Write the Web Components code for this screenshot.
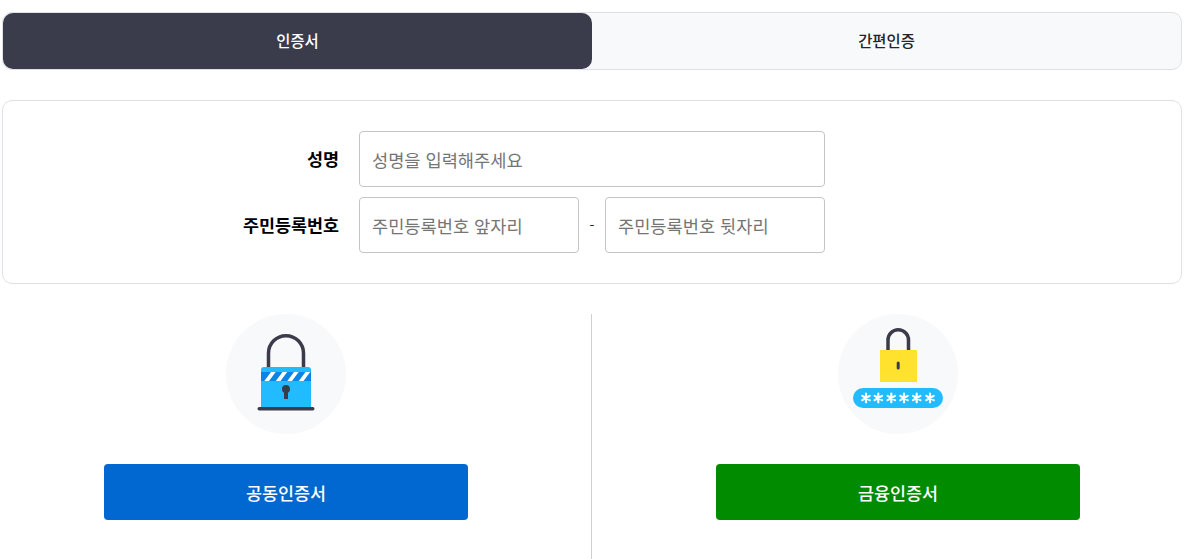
<!DOCTYPE html>
<html lang="ko">
<head>
<meta charset="utf-8">
<title>인증</title>
<style>
html, body { margin: 0; background: #fff; }
body {
    padding: 12px 22px 0 2px;
    height: 559px;
    box-sizing: border-box;
    overflow: hidden;
    font-family: "Noto Sans CJK KR", "Noto Sans", sans-serif;
    color: #000;
}
</style>
</head>
<body>
<auth-tabs>
    <tab-item active>인증서</tab-item>
    <tab-item>간편인증</tab-item>
</auth-tabs>
<id-form></id-form>
<cert-choices></cert-choices>

<script>
class AuthTabs extends HTMLElement {
    constructor() {
        super();
        this.attachShadow({mode: "open"}).innerHTML = `
        <style>
        :host {
            display: flex;
            height: 58px;
            box-sizing: border-box;
            background: #f8f9fa;
            border: 1px solid #dee2e6;
            border-radius: 10px;
        }
        </style>
        <slot></slot>`;
    }
}

class TabItem extends HTMLElement {
    constructor() {
        super();
        this.attachShadow({mode: "open"}).innerHTML = `
        <style>
        :host {
            flex: 1;
            display: flex;
            align-items: center;
            justify-content: center;
            padding-bottom: 2px;
            box-sizing: border-box;
            border-radius: 10px;
            font-size: 15.400px;
            font-weight: 500;
            color: #212529;
        }
        :host([active]) {
            background: #3a3c4c;
            color: #fff;
        }
        </style>
        <slot></slot>`;
    }
}

class TextField extends HTMLElement {
    constructor() {
        super();
        const root = this.attachShadow({mode: "open"});
        root.innerHTML = `
        <style>
        :host { display: block; width: 100%; }
        input {
            display: block;
            width: 100%;
            height: 56px;
            box-sizing: border-box;
            padding: 0 12px;
            border: 1px solid #c4c4c4;
            border-radius: 4px;
            outline: 0;
            background: #fff;
            font: 400 17.600px "Noto Sans CJK KR", "Noto Sans", sans-serif;
        }
        input::placeholder { color: #757575; opacity: 1; }
        </style>
        <input type="text">`;
        root.querySelector("input").placeholder = this.getAttribute("placeholder") || "";
    }
}

class FormRow extends HTMLElement {
    constructor() {
        super();
        const root = this.attachShadow({mode: "open"});
        root.innerHTML = `
        <style>
        :host {
            display: grid;
            grid-template-columns: 336px 466px;
            column-gap: 20px;
            align-items: center;
        }
        label {
            text-align: right;
            font-size: 17.400px;
            font-weight: 700;
            padding-bottom: 2px;
        }
        </style>
        <label></label>
        <div><slot></slot></div>`;
        root.querySelector("label").textContent = this.getAttribute("label");
    }
}

class IdForm extends HTMLElement {
    constructor() {
        super();
        this.attachShadow({mode: "open"}).innerHTML = `
        <style>
        :host {
            display: flex;
            flex-direction: column;
            gap: 10px;
            margin-top: 30px;
            height: 184px;
            box-sizing: border-box;
            padding: 30px 0;
            border: 1px solid #dee2e6;
            border-radius: 10px;
        }
        .pair {
            display: grid;
            grid-template-columns: 220px 26px 220px;
            align-items: center;
        }
        .dash {
            text-align: center;
            font-size: 14px;
            color: #212529;
        }
        </style>
        <form-row label="성명">
            <text-field placeholder="성명을 입력해주세요"></text-field>
        </form-row>
        <form-row label="주민등록번호">
            <div class="pair">
                <text-field placeholder="주민등록번호 앞자리"></text-field>
                <span class="dash">-</span>
                <text-field placeholder="주민등록번호 뒷자리"></text-field>
            </div>
        </form-row>`;
    }
}

class CertCard extends HTMLElement {
    constructor() {
        super();
        const root = this.attachShadow({mode: "open"});
        root.innerHTML = `
        <style>
        :host {
            display: flex;
            flex-direction: column;
            align-items: center;
            box-sizing: border-box;
        }
        button {
            display: block;
            width: 364px;
            height: 56px;
            margin-top: 30px;
            padding: 0;
            border: 0;
            border-radius: 4px;
            color: #fff;
            background: var(--btn);
            font: 500 17.400px "Noto Sans CJK KR", "Noto Sans", sans-serif;
        }
        </style>
        <slot name="icon"></slot>
        <button><slot></slot></button>`;
    }
}

class CertChoices extends HTMLElement {
    constructor() {
        super();
        this.attachShadow({mode: "open"}).innerHTML = `
        <style>
        :host {
            display: grid;
            grid-template-columns: 589px 1px 590px;
            margin-top: 30px;
            height: 245px;
        }
        .line { background: #d0d0d0; }
        svg { display: block; }
        </style>
        <cert-card style="--btn:#0068d0; padding-right:21px">
            <svg slot="icon" width="120" height="120" viewBox="0 0 120 120">
                <circle cx="60" cy="60" r="60" fill="#f8f9fa"/>
                <path d="M42.500 55V39.200a17.500 17.500 0 0 1 35 0V55" fill="none" stroke="#3a3c4c" stroke-width="3.500"/>
                <path d="M35 56a3 3 0 0 1 3-3h44a3 3 0 0 1 3 3v37H35z" fill="#22bbff"/>
                <rect x="35" y="58" width="50" height="9" fill="#0a84e6"/>
                <path d="M38.300 67l6.700-9h4.700l-6.700 9zM49.800 67l6.700-9h4.700l-6.700 9zM61.300 67l6.700-9h4.700l-6.700 9zM72.800 67l6.700-9h4.700l-6.700 9z" fill="#fff"/>
                <circle cx="60" cy="75" r="4" fill="#3a3c4c"/>
                <rect x="58" y="75" width="4" height="10" fill="#3a3c4c"/>
                <rect x="31.500" y="93" width="57" height="3.500" rx="1.700" fill="#3a3c4c"/>
            </svg>
            공동인증서
        </cert-card>
        <div class="line"></div>
        <cert-card style="--btn:#008b00; padding-left:22px">
            <svg slot="icon" width="120" height="120" viewBox="0 0 120 120">
                <circle cx="60" cy="60" r="60" fill="#f8f9fa"/>
                <path d="M50 37V26a10.250 10.250 0 0 1 20.500 0V37" fill="none" stroke="#3a3c4c" stroke-width="3.500"/>
                <rect x="42" y="36" width="37" height="32" fill="#ffe22e"/>
                <rect x="58.700" y="47.500" width="3" height="8" rx="1.500" fill="#3a3c4c"/>
                <rect x="15" y="74" width="90" height="20" rx="10" fill="#22bbff"/>
                <g stroke="#fff" stroke-width="2.200" stroke-linecap="round">
                    <path d="M28 79.700v8.600M24.300 81.850l7.400 4.300M24.300 86.150l7.400-4.300"/>
                    <path d="M40.300 79.700v8.600M36.600 81.850l7.400 4.300M36.600 86.150l7.400-4.300"/>
                    <path d="M53.300 79.700v8.600M49.600 81.850l7.400 4.300M49.600 86.150l7.400-4.300"/>
                    <path d="M66 79.700v8.600M62.300 81.850l7.400 4.300M62.300 86.150l7.400-4.300"/>
                    <path d="M78.700 79.700v8.600M75 81.850l7.400 4.300M75 86.150l7.400-4.300"/>
                    <path d="M92 79.700v8.600M88.300 81.850l7.400 4.300M88.300 86.150l7.400-4.300"/>
                </g>
            </svg>
            금융인증서
        </cert-card>`;
    }
}

customElements.define("auth-tabs", AuthTabs);
customElements.define("tab-item", TabItem);
customElements.define("text-field", TextField);
customElements.define("form-row", FormRow);
customElements.define("id-form", IdForm);
customElements.define("cert-card", CertCard);
customElements.define("cert-choices", CertChoices);
</script>
</body>
</html>
